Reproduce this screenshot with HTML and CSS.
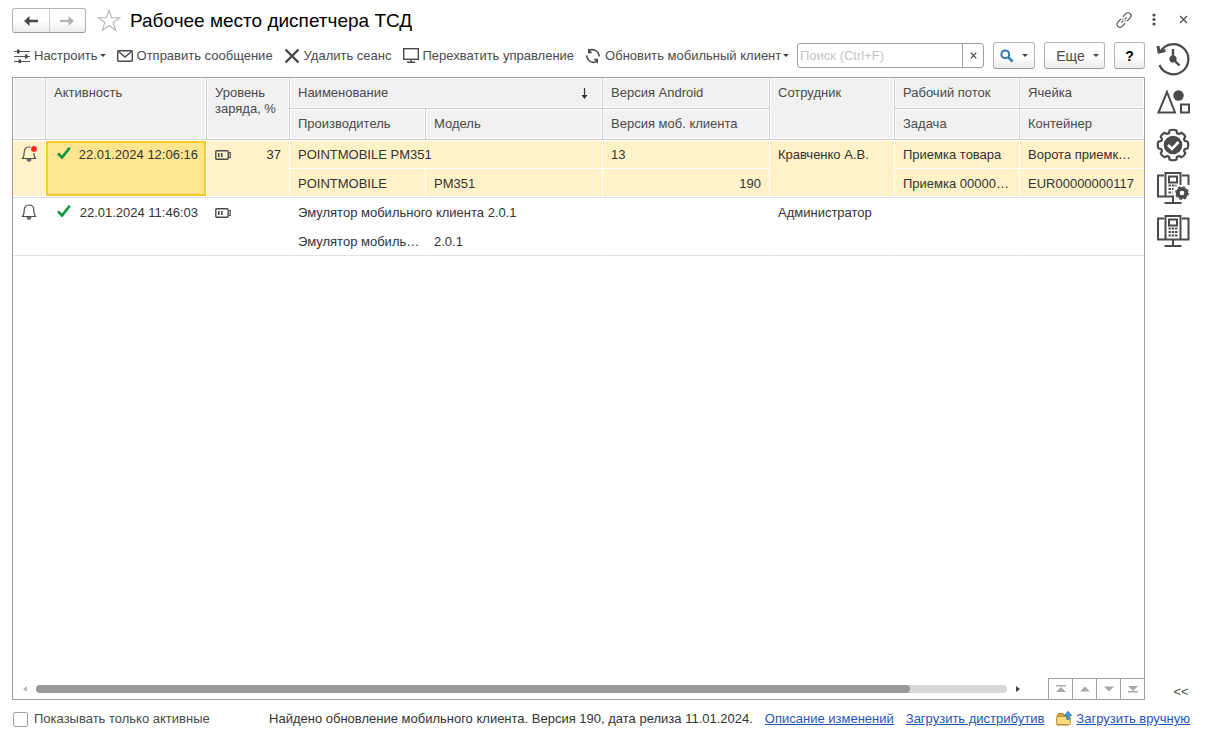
FILE: index.html
```html
<!DOCTYPE html>
<html lang="ru">
<head>
<meta charset="utf-8">
<title>Рабочее место диспетчера ТСД</title>
<link rel="stylesheet" href="styles.css">
</head>
<body>
<svg class="defs" aria-hidden="true">
  <symbol id="bell" viewBox="0 0 16 16">
    <path d="M1.200 12.500C3.200 11 3.200 9 3.200 6C3.200 3.200 5 1 8 1S12.800 3.200 12.800 6C12.800 9 12.800 11 14.800 12.500Z" fill="none" stroke="#4d4d4d" stroke-width="1.200" stroke-linejoin="round"/>
    <path d="M6 13.500a2 2 0 0 0 4 0z" fill="#888" stroke="#4d4d4d" stroke-width=".8"/>
  </symbol>
  <symbol id="check" viewBox="0 0 14 13">
    <path d="M1 6.300L5 10.500L12.800 .8" fill="none" stroke="#0b9444" stroke-width="2.600"/>
  </symbol>
  <symbol id="battery" viewBox="0 0 16 10">
    <rect x=".8" y=".8" width="12.400" height="8.400" rx="1" fill="none" stroke="#4a4a4a" stroke-width="1.400"/>
    <path d="M14 2.500h1.200v5H14" fill="none" stroke="#4a4a4a" stroke-width="1.200"/>
    <path d="M3 3h1.600v4H3zM6 3h1.600v4H6z" fill="#4a4a4a"/>
  </symbol>
</svg>
<div class="app">
  <header class="titlebar">
    <div class="history">
      <button class="history-button" aria-label="Назад"><svg width="16" height="12" viewBox="0 0 16 12"><path d="M15 6H4" stroke="#4a4a4a" stroke-width="2.600"/><path d="M1 6L6.500 1V11Z" fill="#4a4a4a"/></svg></button>
      <button class="history-button" aria-label="Вперед"><svg width="16" height="12" viewBox="0 0 16 12"><path d="M1 6H12" stroke="#b3b3b3" stroke-width="2.200"/><path d="M15 6L9.500 1V11Z" fill="#b3b3b3"/></svg></button>
    </div>
    <button class="plain star" aria-label="Избранное"><svg width="24" height="23" viewBox="0 0 24 23"><path d="M12 1.200L14.600 8.800H22.700L16.200 13.500L18.600 21.300L12 16.500L5.400 21.300L7.800 13.500L1.300 8.800H9.400Z" fill="#fff" stroke="#b2b8be" stroke-width="1.100"/></svg></button>
    <h1 class="title">Рабочее место диспетчера ТСД</h1>
    <div class="window-tools">
      <button class="plain" aria-label="Ссылка"><svg width="16" height="16" viewBox="0 0 16 16" fill="none" stroke="#555" stroke-width="1.200"><path d="M6.800 4.800L9.900 1.700a2.900 2.900 0 0 1 4.200 4.200L11 9"/><path d="M9.200 11.200L6.100 14.300a2.900 2.900 0 0 1-4.200-4.200L5 7"/><path d="M5.300 10.700l2-2M8.700 7.300l2-2M9.500 8.500l-.8 1M6.500 7.500l.8-1"/></svg></button>
      <button class="plain" aria-label="Меню"><svg width="16" height="16" viewBox="0 0 16 16" fill="#4d4d4d"><circle cx="8" cy="3" r="1.600"/><circle cx="8" cy="7.500" r="1.600"/><circle cx="8" cy="12" r="1.600"/></svg></button>
      <button class="plain" aria-label="Закрыть"><svg width="16" height="16" viewBox="0 0 16 16"><path d="M4 4l7 7M11 4l-7 7" stroke="#444" stroke-width="1.100"/></svg></button>
    </div>
  </header>

  <main class="workspace">
    <section class="content">
      <div class="toolbar">
        <div class="commands">
          <button class="command"><svg width="16" height="14" viewBox="0 0 16 14"><path d="M0 2.500h16M0 7.500h16M0 12.500h16" stroke="#5a5a5a" stroke-width="1.200"/><path d="M3 .5h2.500v4H3zM11 5.500h2.500v4H11zM4.500 10.500H7v4H4.500z" fill="#444"/></svg>Настроить<i class="caret"></i></button>
          <button class="command"><svg width="16" height="12" viewBox="0 0 16 12" fill="none" stroke="#4a4a4a" stroke-width="1.400"><rect x=".7" y=".7" width="14.600" height="10.600" rx="1"/><path d="M1.200 1.200L8 7L14.800 1.200"/></svg>Отправить сообщение</button>
          <button class="command"><svg width="16" height="14" viewBox="0 0 16 14"><path d="M1.500 .5L14.500 13.500M14.500 .5L1.500 13.500" stroke="#4a4a4a" stroke-width="2.400"/></svg>Удалить сеанс</button>
          <button class="command"><svg width="16" height="15" viewBox="0 0 16 15" fill="none" stroke="#4a4a4a" stroke-width="1.400"><rect x=".7" y=".7" width="14.600" height="10.600"/><path d="M8 11v3M4 14.200h8"/></svg>Перехватить управление</button>
          <button class="command"><svg width="16" height="16" viewBox="0 0 16 16" fill="none" stroke="#4a4a4a" stroke-width="1.600"><path d="M3.500 2.600C8 .2 13.800 2.500 14.200 8.500M12.500 13.400C8 15.800 2.200 13.500 1.800 7.500"/><path d="M3 .2V5.300H7.500ZM13 15.800V10.700H8.500Z" fill="#4a4a4a" stroke="none"/></svg>Обновить мобильный клиент<i class="caret"></i></button>
        </div>
        <div class="search">
          <input class="search-input" type="text" placeholder="Поиск (Ctrl+F)" aria-label="Поиск">
          <button class="search-clear" aria-label="Очистить"><svg width="7" height="7" viewBox="0 0 7 7"><path d="M.7 .7l5.600 5.600M6.300 .7L.7 6.300" stroke="#444" stroke-width="1.200"/></svg></button>
        </div>
        <button class="button find" aria-label="Найти"><svg width="14" height="14" viewBox="0 0 14 14" fill="none" stroke="#337ab7"><circle cx="5.300" cy="5.300" r="3.900" stroke-width="2"/><path d="M8.200 8.200L12.600 12.600" stroke-width="2.600"/></svg><i class="caret"></i></button>
        <button class="button more">Еще<i class="caret"></i></button>
        <button class="button help">?</button>
      </div>

      <div class="grid">
        <table class="sessions">
          <colgroup><col class="c-bell"><col class="c-activity"><col class="c-charge"><col class="c-maker"><col class="c-model"><col class="c-version"><col class="c-person"><col class="c-flow"><col></colgroup>
          <thead>
            <tr><th rowspan="2"></th><th rowspan="2">Активность</th><th rowspan="2">Уровень заряда, %</th><th colspan="2"><div class="sorted">Наименование<svg width="7" height="11" viewBox="0 0 7 11"><path d="M3.500 0v9" stroke="#333" stroke-width="1.200"/><path d="M.5 7h6L3.500 11z" fill="#333"/></svg></div></th><th>Версия Android</th><th rowspan="2">Сотрудник</th><th>Рабочий поток</th><th>Ячейка</th></tr>
            <tr><th>Производитель</th><th>Модель</th><th>Версия моб. клиента</th><th>Задача</th><th>Контейнер</th></tr>
          </thead>
          <tbody class="selected">
            <tr><td rowspan="2"><svg class="bell" viewBox="0 0 16 16"><use href="#bell"/><circle cx="13" cy="3" r="3.900" fill="#fff2c8"/><circle cx="13" cy="2.900" r="2.900" fill="#f8261c"/></svg></td><td rowspan="2" class="current"><div class="pair"><svg class="check"><use href="#check"/></svg>22.01.2024 12:06:16</div></td><td rowspan="2"><div class="pair"><svg class="battery"><use href="#battery"/></svg>37</div></td><td colspan="2">POINTMOBILE PM351</td><td>13</td><td rowspan="2">Кравченко А.В.</td><td>Приемка товара</td><td>Ворота приемк…</td></tr>
            <tr><td>POINTMOBILE</td><td>PM351</td><td class="number">190</td><td>Приемка 00000…</td><td>EUR00000000117</td></tr>
          </tbody>
          <tbody>
            <tr><td rowspan="2"><svg class="bell"><use href="#bell"/></svg></td><td rowspan="2"><div class="pair"><svg class="check"><use href="#check"/></svg>22.01.2024 11:46:03</div></td><td rowspan="2"><div class="pair"><svg class="battery"><use href="#battery"/></svg></div></td><td colspan="2">Эмулятор мобильного клиента 2.0.1</td><td></td><td rowspan="2">Администратор</td><td></td><td></td></tr>
            <tr><td>Эмулятор мобиль…</td><td>2.0.1</td><td></td><td></td><td></td></tr>
          </tbody>
        </table>
        <div class="grid-footer">
          <svg width="5" height="8" viewBox="0 0 5 8"><path d="M5 1v6L1 4z" fill="#bbb"/></svg>
          <div class="scroll-track"><div class="scroll-thumb"></div></div>
          <svg width="5" height="8" viewBox="0 0 5 8"><path d="M0 1v6l4-3z" fill="#444"/></svg>
          <div class="pager">
            <button class="pager-button" aria-label="В начало"><svg width="10" height="8" viewBox="0 0 10 8" fill="#aaa"><path d="M0 0h10v1.500H0zM5 2l5 5H0z"/></svg></button>
            <button class="pager-button" aria-label="Вверх"><svg width="10" height="8" viewBox="0 0 10 8" fill="#aaa"><path d="M5 1.500l5 5H0z"/></svg></button>
            <button class="pager-button" aria-label="Вниз"><svg width="10" height="8" viewBox="0 0 10 8" fill="#aaa"><path d="M0 1.500h10l-5 5z"/></svg></button>
            <button class="pager-button" aria-label="В конец"><svg width="10" height="8" viewBox="0 0 10 8" fill="#aaa"><path d="M0 1h10L5 6zM0 6h10v1.500H0z"/></svg></button>
          </div>
        </div>
      </div>
    </section>

    <aside class="sidebar">
      <button class="plain" aria-label="История"><svg width="34" height="34" viewBox="0 0 34 34"><path d="M4.500 9.500A15 15 0 1 1 3.500 23" fill="none" stroke="#4a4a4a" stroke-width="2.200"/><path d="M2 4L3 10L9.500 8.500" fill="none" stroke="#4a4a4a" stroke-width="3"/><path d="M17 7v10l6.500 6.500" fill="none" stroke="#4a4a4a" stroke-width="2.400"/><circle cx="17" cy="17" r="3.600" fill="#4a4a4a"/></svg></button>
      <button class="plain" aria-label="Объекты"><svg width="34" height="34" viewBox="0 0 34 34" fill="none" stroke="#4a4a4a" stroke-width="2"><path d="M11 7L19 27.500H2.500Z"/><circle cx="22.500" cy="10.500" r="5.200" fill="#4a4a4a" stroke="none"/><rect x="25" y="19.500" width="8" height="8"/></svg></button>
      <button class="plain" aria-label="Настройки"><svg width="34" height="34" viewBox="0 0 34 34"><path d="M13.500 2.500Q17 1 20.500 2.500L21 5.200L23 6L25.500 4.700Q28.500 6 29.300 8.700L28 11L28.800 13L31.500 13.500Q33 17 31.500 20.500L28.800 21L28 23L29.300 25.300Q28.500 28 25.500 29.300L23 28L21 28.800L20.500 31.500Q17 33 13.500 31.500L13 28.800L11 28L8.500 29.300Q5.500 28 4.700 25.300L6 23L5.200 21L2.500 20.500Q1 17 2.500 13.500L5.200 13L6 11L4.700 8.700Q5.500 6 8.500 4.700L11 6L13 5.200Z" fill="none" stroke="#4a4a4a" stroke-width="2.200" stroke-linejoin="round"/><circle cx="17" cy="17" r="9.300" fill="#4a4a4a"/><path d="M12 17l4 4l6.500-7" fill="none" stroke="#fff" stroke-width="2.600"/></svg></button>
      <button class="plain" aria-label="Настройка терминалов"><svg width="34" height="34" viewBox="0 0 34 34" fill="none" stroke="#4a4a4a" stroke-width="2"><path d="M8 4.500H2V25.500H17V32M26 4.500H32.500V14M8.500 32h17"/><path d="M9.500 25V2h15v12M13 5.500h8v6h-8z"/><path d="M12.500 14.500h8M12.500 18h5M12.500 21.500h4" stroke-dasharray="2.400 1"/><circle cx="26" cy="22" r="8.200" fill="#fff" stroke="none"/><circle cx="26" cy="22" r="4.200" stroke-width="3.800"/><circle cx="26" cy="22" r="6.300" stroke-width="1.200" stroke-dasharray="2.500 2.450"/></svg></button>
      <button class="plain" aria-label="Терминалы"><svg width="34" height="34" viewBox="0 0 34 34" fill="none" stroke="#4a4a4a" stroke-width="2"><path d="M8 4.500H2V25.500H32.500V4.500H26M17 26v6M8.500 32h17"/><path d="M9.500 25V2h15v23M13 5.500h8v6h-8z"/><path d="M12.500 14.500h9M12.500 18h9M12.500 21.500h9" stroke-dasharray="2.400 .9"/></svg></button>
      <button class="plain collapse">&lt;&lt;</button>
    </aside>
  </main>

  <footer class="status">
    <label class="only-active"><input class="tick" type="checkbox">Показывать только активные</label>
    <div class="update">
      <span class="notice">Найдено обновление мобильного клиента. Версия 190, дата релиза 11.01.2024.</span>
      <a class="link" href="#">Описание изменений</a>
      <a class="link" href="#">Загрузить дистрибутив</a>
      <span class="manual"><svg width="16" height="16" viewBox="0 0 16 16"><path d="M1 5L2.500 2.500H7L8 4.500H13V14H1Z" fill="#d9a441" stroke="#b17c28"/><rect x=".7" y="5.500" width="13.600" height="8" rx="1" fill="#fbdc7e" stroke="#c18c35"/><path d="M12 .3L15.700 4.500H13.200V8.500H10.800V4.500H8.300Z" fill="#3d9be0" stroke="#1f6cab" stroke-width=".7"/></svg><a class="link" href="#">Загрузить вручную</a></span>
    </div>
  </footer>
</div>
</body>
</html>
```
FILE: styles.css
```css
* { box-sizing: border-box; }

body {
  margin: 0;
  background: #fff;
  color: #4a4a4a;
  font: 13px/16px "Liberation Sans", Arial, sans-serif;
}

button, input { font: inherit; color: inherit; }
button { margin: 0; padding: 0; border: 0; background: none; }
svg { display: block; flex: none; }
.defs { position: absolute; width: 0; height: 0; }

.app {
  display: flex;
  flex-direction: column;
  min-height: 100vh;
  padding: 8px 20px 12px 12px;
}

/* Title bar */
.titlebar { display: flex; align-items: center; height: 25px; }
.history {
  display: flex;
  width: 74px;
  height: 25px;
  border: 1px solid #b5b5b5;
  border-bottom-color: #999;
  border-radius: 3px;
  background: linear-gradient(#fff 50%, #ececec);
}
.history-button { display: flex; flex: 1; align-items: center; justify-content: center; }
.history-button + .history-button { border-left: 1px solid #ccc; }
.star { margin-left: 11px; }
.title { margin: 0 0 0 9px; color: #000; font-size: 19px; line-height: 24px; font-weight: 400; }
.window-tools { display: flex; gap: 14px; margin: 0 -2px 0 auto; padding-bottom: 2px; }

/* Main area */
.workspace { display: flex; flex: 1; gap: 11px; padding-top: 9px; }
.content { display: flex; flex: 1; flex-direction: column; min-width: 0; }

.toolbar { display: flex; align-items: center; height: 27px; margin-bottom: 8px; padding-left: 2px; }
.commands { display: flex; gap: 11px; }
.command { display: flex; align-items: center; gap: 4px; white-space: nowrap; }
.caret {
  border: 3px solid transparent;
  border-top-color: #444;
  border-bottom: 0;
}
.command .caret { margin-left: -2px; }
.search {
  display: flex;
  width: 187px;
  height: 25px;
  margin-left: auto;
  border: 1px solid #a0a0a0;
  border-radius: 3px;
}
.search-input { flex: 1; min-width: 0; padding: 0 2px; border: 0; background: none; outline: 0; }
.search-input::placeholder { color: #c4c4c8; opacity: 1; }
.search-clear {
  display: flex;
  align-items: center;
  justify-content: center;
  width: 21px;
  border-left: 1px solid #a0a0a0;
}
.button {
  display: flex;
  flex: none;
  align-items: center;
  justify-content: center;
  gap: 8px;
  height: 27px;
  margin-left: 9px;
  border: 1px solid #b5b5b5;
  border-bottom-color: #999;
  border-radius: 3px;
  background: linear-gradient(#fff 50%, #ececec);
}
.find { width: 42px; }
.more { width: 61px; padding-left: 6px; font-size: 14px; }
.help { width: 31px; color: #000; font-size: 14px; font-weight: 700; }

/* Session grid */
.grid { display: flex; flex: 1; flex-direction: column; border: 1px solid #a0a0a0; }
.sessions { width: 100%; table-layout: fixed; border-spacing: 0; }
.c-bell { width: 33px; }
.c-activity { width: 161px; }
.c-charge { width: 83px; }
.c-maker { width: 136px; }
.c-model { width: 177px; }
.c-version { width: 167px; }
.c-person, .c-flow { width: 125px; }

.sessions th {
  height: 31px;
  padding: 7px 8px;
  border-right: 1px solid #ccc;
  border-bottom: 1px solid #ccc;
  background: #f1f1f1;
  box-shadow: inset 0 0 0 1px #fff;
  font-weight: 400;
  text-align: left;
  vertical-align: top;
}
.sessions th:last-child, .sessions td:last-child { border-right: 0; }
.sorted { display: flex; align-items: center; justify-content: space-between; padding-right: 6px; }

.sessions td {
  height: 29px;
  padding: 7px 8px 5px;
  overflow: hidden;
  border-right: 1px solid #fff;
  border-bottom: 1px solid #fff;
  color: #333;
  vertical-align: top;
  white-space: nowrap;
}
.sessions tr:last-child td, .sessions td[rowspan] { border-bottom-color: #e2e2e2; }
.selected td { background: #fff2c8; }
.selected tr:first-child td { box-shadow: inset 0 1px #fff; }
.selected tr:last-child td { box-shadow: inset 0 -1px #fff; }
.selected tr:first-child td[rowspan] { box-shadow: inset 0 1px #fff, inset 0 -1px #fff; }
.selected tr:first-child td.current {
  background: #ffe590;
  box-shadow: inset 0 1px #fff, inset 0 -1px #fff, inset 0 3px #fbc926, inset 0 -3px #fbc926, inset 2px 0 #fbc926, inset -2px 0 #fbc926;
}
.number { text-align: right; }
.pair { display: flex; align-items: center; justify-content: space-between; height: 16px; }
.bell { width: 16px; height: 16px; margin-top: -1px; }
.check { width: 14px; height: 13px; margin: 0 0 4px 3px; }
.battery { width: 16px; height: 10px; }

/* Scroll bar and row navigation */
.grid-footer { display: flex; align-items: center; height: 21px; margin-top: auto; padding-left: 9px; }
.scroll-track { flex: 1; height: 8px; margin: 0 9px; border-radius: 4px; background: #d8d8d8; }
.scroll-thumb { width: 90%; height: 8px; border-radius: 4px; background: #999; }
.pager { display: flex; height: 21px; margin-left: 27px; border-top: 1px solid #a0a0a0; }
.pager-button {
  display: flex;
  align-items: center;
  justify-content: center;
  width: 24px;
  border-left: 1px solid #a0a0a0;
}

/* Side panel */
.plain { display: flex; align-items: center; justify-content: center; }
.sidebar { display: flex; flex-direction: column; align-items: center; gap: 9px; width: 34px; }
.collapse { width: 34px; margin-top: auto; padding-left: 16px; line-height: 16px; }

/* Status line */
.status { display: flex; align-items: center; justify-content: space-between; height: 16px; margin-top: 11px; }
.only-active { display: flex; align-items: center; gap: 6px; }
.tick {
  width: 15px;
  height: 15px;
  margin: 0 0 0 1px;
  appearance: none;
  border: 1px solid #a0a0a0;
  border-radius: 2px;
  background: #fff;
}
.tick:checked { background: #4a4a4a; }
.update { display: flex; gap: 12px; white-space: nowrap; }
.notice { color: #333; }
.manual { display: flex; gap: 4px; }
.link { color: #1f55b5; text-decoration: underline; }
```
